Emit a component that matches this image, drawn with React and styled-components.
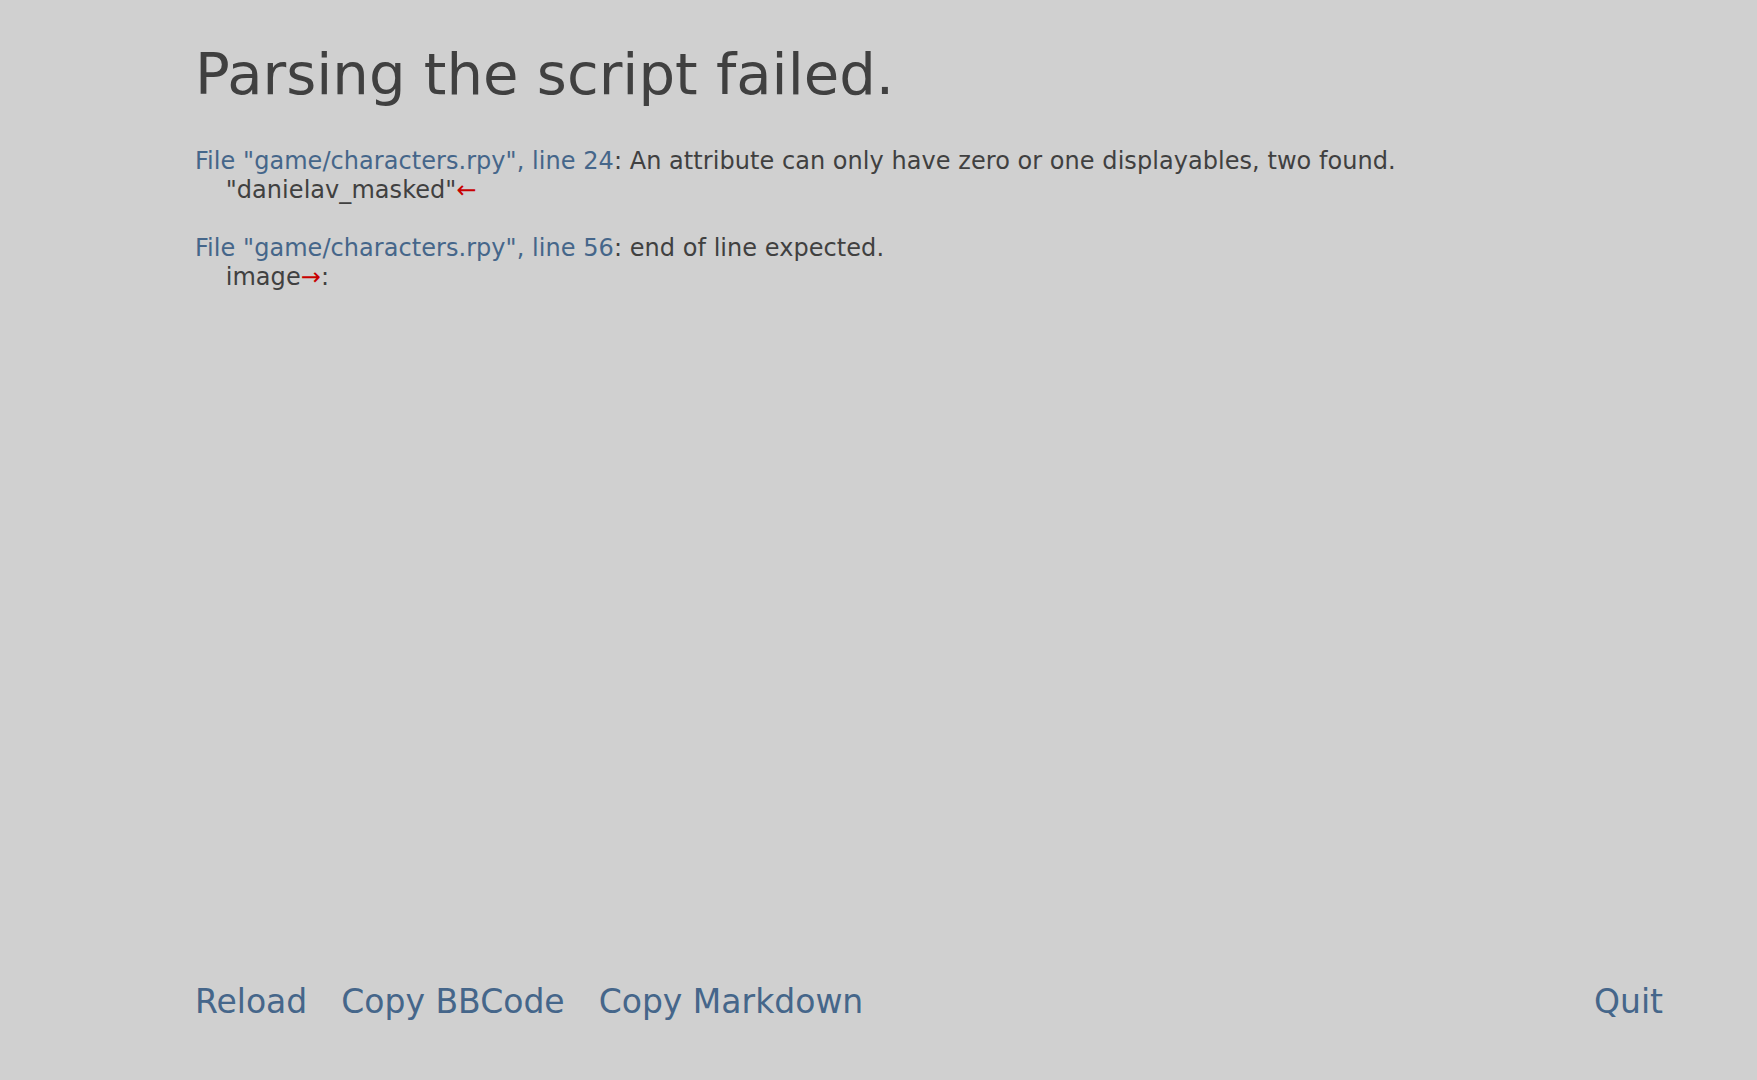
import React from "react";
import styled, { createGlobalStyle } from "styled-components";

const GlobalStyle = createGlobalStyle`
  html, body {
    margin: 0;
    padding: 0;
    background: #d0d0d0;
  }
  body {
    font-family: "DejaVu Sans", "Liberation Sans", sans-serif;
  }
`;

const Screen = styled.div`
  display: flex;
  flex-direction: column;
  height: 100vh;
  box-sizing: border-box;
  padding: 40px 94px 59px 195px;
  background: #d0d0d0;
  color: #404040;
`;

const Content = styled.div`
  flex: 1;
`;

const Title = styled.h1`
  margin: 0 0 39px;
  font-size: 57.7px;
  font-weight: normal;
  line-height: normal;
  color: #404040;
`;

const ErrorBlock = styled.div`
  margin-bottom: 29px;
`;

const Line = styled.div`
  font-size: 24px;
  line-height: 29px;
  letter-spacing: 0.05px;
  white-space: pre;
`;

const Where = styled.span`
  color: #45668a;
`;

const Arrow = styled.span`
  color: #c80000;
`;

const Footer = styled.div`
  display: flex;
  align-items: baseline;
  gap: 34px;
`;

const Action = styled.span`
  font-size: 33px;
  line-height: normal;
  color: #45668a;
  margin-left: ${(p) => (p.$push ? "auto" : "0")};
`;

const errors = [
  {
    where: 'File "game/characters.rpy", line 24',
    message: ": An attribute can only have zero or one displayables, two found.",
    before: '    "danielav_masked"',
    arrow: "←",
    after: "",
  },
  {
    where: 'File "game/characters.rpy", line 56',
    message: ": end of line expected.",
    before: "    image",
    arrow: "→",
    after: ":",
  },
];

export default function App() {
  return (
    <>
      <GlobalStyle />
      <Screen>
        <Content>
          <Title>Parsing the script failed.</Title>
          {errors.map((e) => (
            <ErrorBlock key={e.where}>
              <Line>
                <Where>{e.where}</Where>
                {e.message}
              </Line>
              <Line>
                {e.before}
                <Arrow>{e.arrow}</Arrow>
                {e.after}
              </Line>
            </ErrorBlock>
          ))}
        </Content>
        <Footer>
          <Action>Reload</Action>
          <Action>Copy BBCode</Action>
          <Action>Copy Markdown</Action>
          <Action $push>Quit</Action>
        </Footer>
      </Screen>
    </>
  );
}
